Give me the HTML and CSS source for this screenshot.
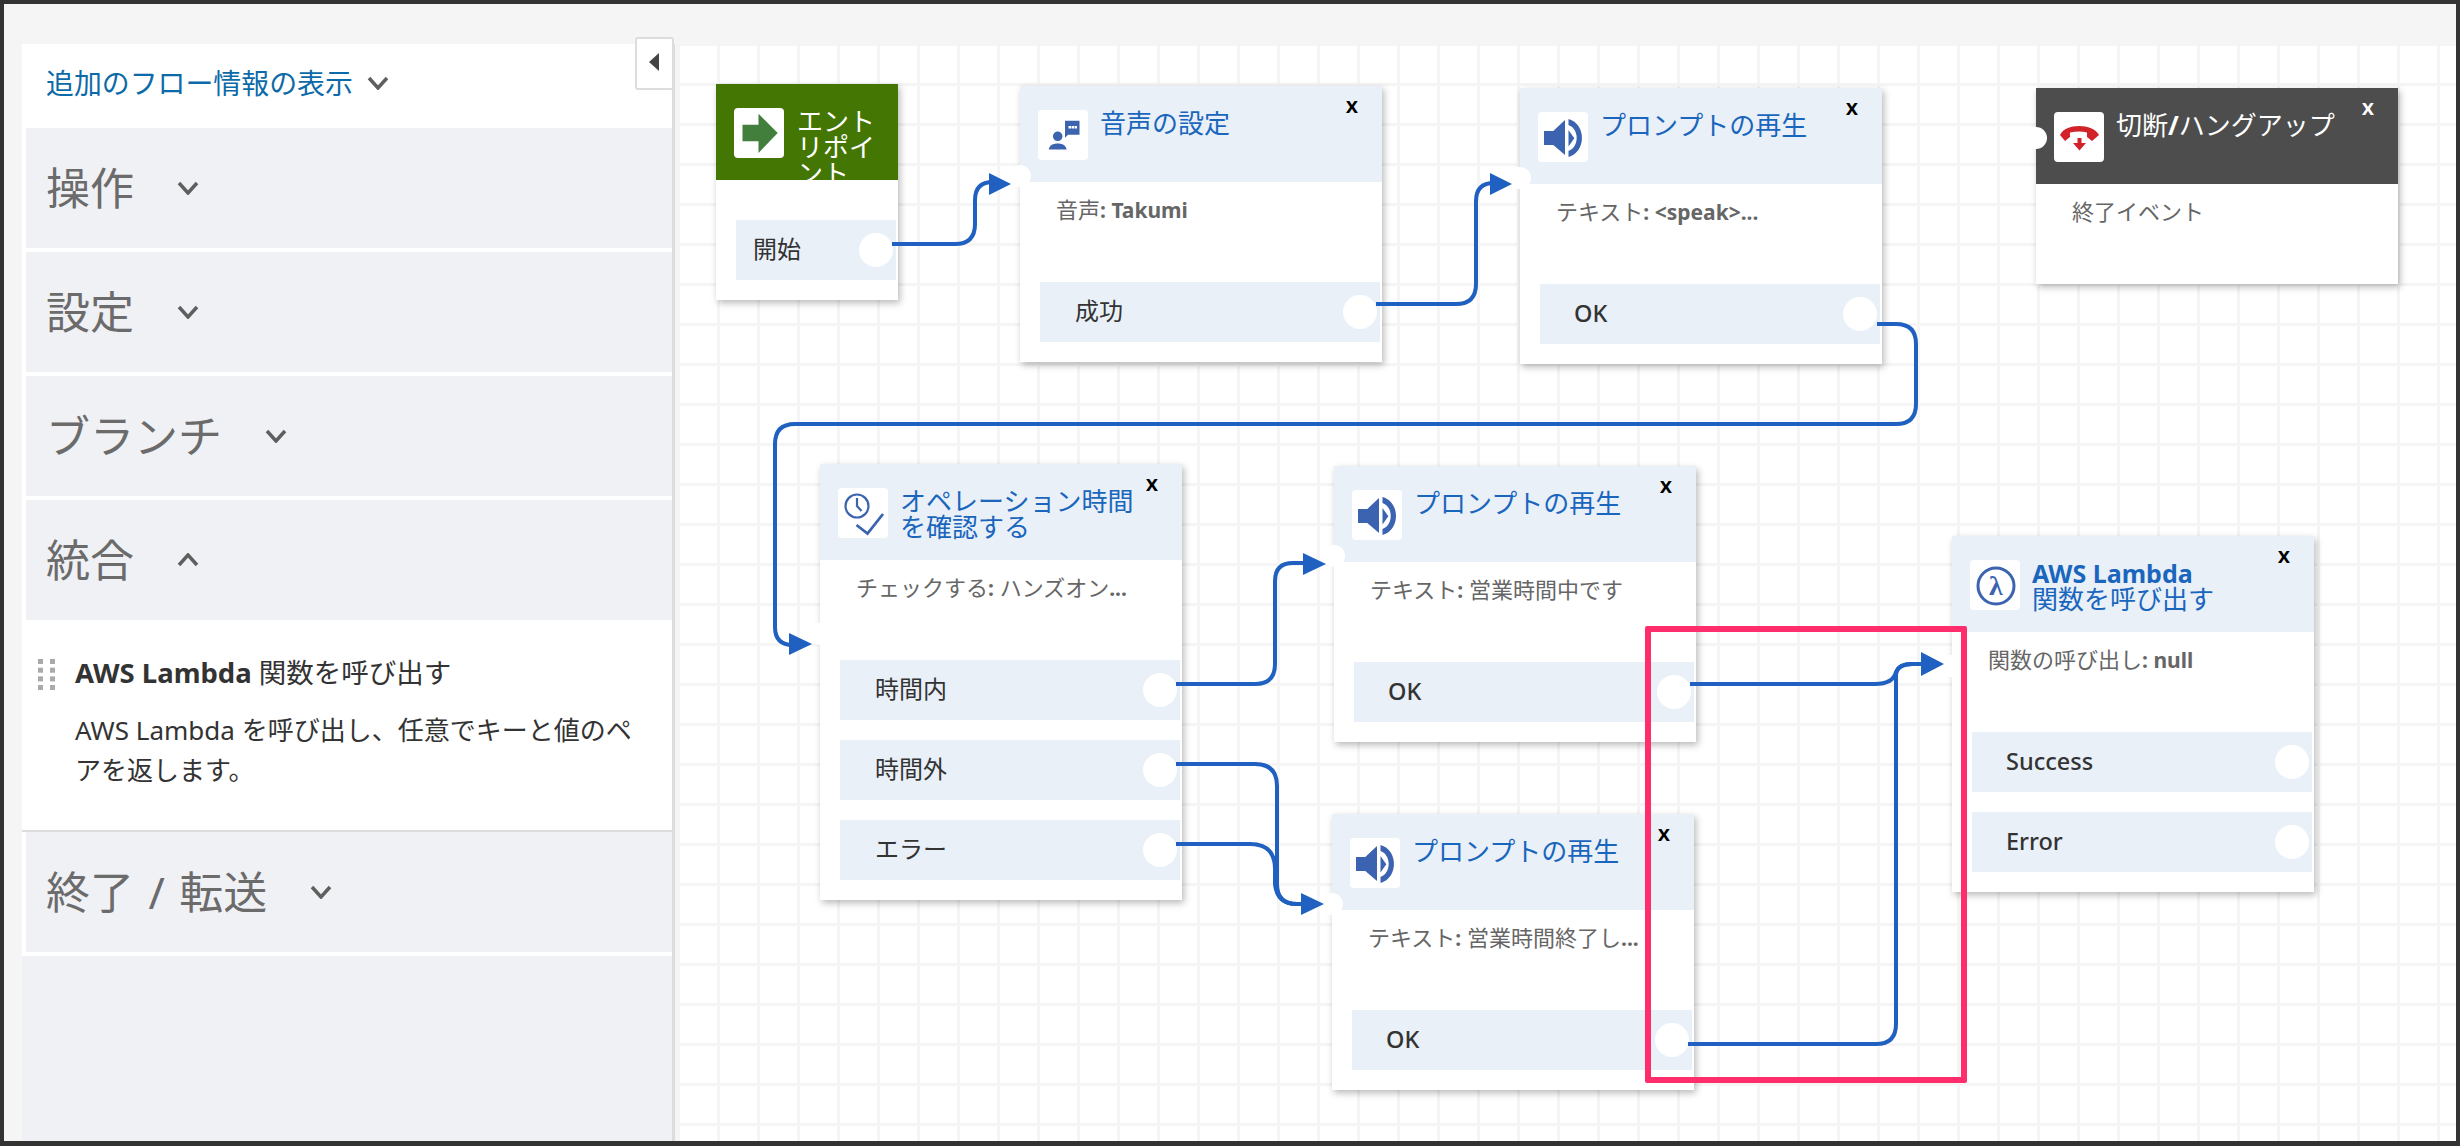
FILE: index.html
```html
<!DOCTYPE html>
<html lang="ja">
<head>
<meta charset="utf-8">
<title>コンタクトフロー</title>
<link rel="stylesheet" href="styles.css">
</head>
<body>
<div class="frame">
  <aside class="sidebar">
    <div class="sidebar-head">
      <a class="info-link">追加のフロー情報の表示</a>
      <svg class="chev chev-small" viewBox="0 0 22 14"><path d="M2 2l9 10 9-10"/></svg>
    </div>
    <button class="collapse"><svg viewBox="0 0 10 18"><path d="M10 0v18L0 9z"/></svg></button>
    <section class="group"><h2>操作</h2><svg class="chev" viewBox="0 0 22 14"><path d="M2 2l9 10 9-10"/></svg></section>
    <section class="group"><h2>設定</h2><svg class="chev" viewBox="0 0 22 14"><path d="M2 2l9 10 9-10"/></svg></section>
    <section class="group"><h2>ブランチ</h2><svg class="chev" viewBox="0 0 22 14"><path d="M2 2l9 10 9-10"/></svg></section>
    <section class="group group-open"><h2>統合</h2><svg class="chev" viewBox="0 0 22 14"><path d="M2 12l9-10 9 10"/></svg></section>
    <div class="group-body">
      <svg class="handle" viewBox="0 0 17 31"><g><rect width="5" height="5"/><rect x="12" width="5" height="5"/><rect y="8.7" width="5" height="5"/><rect x="12" y="8.7" width="5" height="5"/><rect y="17.4" width="5" height="5"/><rect x="12" y="17.4" width="5" height="5"/><rect y="26" width="5" height="5"/><rect x="12" y="26" width="5" height="5"/></g></svg>
      <h3><b>AWS Lambda</b> 関数を呼び出す</h3>
      <p>AWS Lambda を呼び出し、任意でキーと値のペアを返します。</p>
    </div>
    <section class="group group-last"><h2>終了 / 転送</h2><svg class="chev" viewBox="0 0 22 14"><path d="M2 2l9 10 9-10"/></svg></section>
  </aside>

  <main class="canvas">
    <article class="node node-entry">
      <header class="node-head head-green">
        <span class="tile"><svg viewBox="0 0 50 50"><path class="ic-green" d="M8.5 16.7h16V5.7L43.7 25 24.500 45V33.300h-16z"/></svg></span>
        <h4 class="node-title title-white title-entry">エントリポイント</h4>
      </header>
      <div class="node-gap"></div>
      <div class="row row-entry"><span>開始</span><i class="dot"></i></div>
    </article>

    <article class="node node-voice">
      <header class="node-head">
        <span class="tile"><svg viewBox="0 0 50 50"><path class="ic-blue" d="M27 10.700h14.500v14H30l-3 3zM19.700 21.500a4.800 4.800 0 1 1 0 9.600 4.800 4.800 0 0 1 0-9.600zM10.800 39.500c.5-4 4-6 8.900-6s8.400 2 8.900 6z"/><path class="ic-white" d="M30.500 16h2.500v2.500h-2.500zM33.500 16H36v2.500h-2.500zM36.500 16H39v2.500h-2.500z"/></svg></span>
        <h4 class="node-title">音声の設定</h4>
      </header>
      <span class="close">x</span>
      <i class="port port-std"></i>
      <div class="node-desc">音声<b>: Takumi</b></div>
      <div class="row"><span>成功</span><i class="dot"></i></div>
    </article>

    <article class="node node-prompt1">
      <header class="node-head">
        <span class="tile"><svg viewBox="0 0 50 50"><path class="ic-blue" d="M6 19h9.300L27 8v35L15.300 33H6zM30.500 18l5.800 8.300-5.800 8.300zM30.500 7c18 5 18 33 0 38v-6c11-4 11-22 0-26z"/></svg></span>
        <h4 class="node-title">プロンプトの再生</h4>
      </header>
      <span class="close">x</span>
      <i class="port port-std"></i>
      <div class="node-desc">テキスト<b>: &lt;speak&gt;...</b></div>
      <div class="row row-latin"><span>OK</span><i class="dot"></i></div>
    </article>

    <article class="node node-hangup">
      <header class="node-head head-dark">
        <span class="tile"><svg viewBox="0 0 50 50"><path class="ic-red" d="M6 23C11 11 39 11 45 23l-7 6-5-4v-4.500c-5-1.500-11-1.500-17 0V25l-5 4zM23.500 26h4v5H32l-6.500 7.500L19 31h4.500z"/></svg></span>
        <h4 class="node-title title-white">切断<b>/</b>ハングアップ</h4>
      </header>
      <span class="close close-white">x</span>
      <i class="port port-hangup"></i>
      <div class="node-desc">終了イベント</div>
    </article>

    <article class="node node-hours">
      <header class="node-head">
        <span class="tile"><svg viewBox="0 0 50 50"><circle class="ic-line" cx="19" cy="18" r="11.500"/><path class="ic-line" d="M19 10v8l4.500 5"/><path class="ic-check" d="M18.500 37l11 8.500L45 26"/></svg></span>
        <h4 class="node-title title-hours">オペレーション時間を確認する</h4>
      </header>
      <span class="close">x</span>
      <i class="port port-hours"></i>
      <div class="node-desc">チェックする<b>:</b> ハンズオン<b>...</b></div>
      <div class="row row-stack"><span>時間内</span><i class="dot"></i></div>
      <div class="row row-stack"><span>時間外</span><i class="dot"></i></div>
      <div class="row"><span>エラー</span><i class="dot"></i></div>
    </article>

    <article class="node node-prompt2">
      <header class="node-head">
        <span class="tile"><svg viewBox="0 0 50 50"><path class="ic-blue" d="M6 19h9.300L27 8v35L15.300 33H6zM30.500 18l5.800 8.300-5.800 8.300zM30.500 7c18 5 18 33 0 38v-6c11-4 11-22 0-26z"/></svg></span>
        <h4 class="node-title">プロンプトの再生</h4>
      </header>
      <span class="close">x</span>
      <i class="port port-std"></i>
      <div class="node-desc">テキスト<b>:</b> 営業時間中です</div>
      <div class="row row-latin"><span>OK</span><i class="dot"></i></div>
    </article>

    <article class="node node-prompt3">
      <header class="node-head">
        <span class="tile"><svg viewBox="0 0 50 50"><path class="ic-blue" d="M6 19h9.300L27 8v35L15.300 33H6zM30.500 18l5.800 8.300-5.800 8.300zM30.500 7c18 5 18 33 0 38v-6c11-4 11-22 0-26z"/></svg></span>
        <h4 class="node-title">プロンプトの再生</h4>
      </header>
      <span class="close">x</span>
      <i class="port port-std"></i>
      <div class="node-desc">テキスト<b>:</b> 営業時間終了し<b>...</b></div>
      <div class="row row-latin"><span>OK</span><i class="dot"></i></div>
    </article>

    <article class="node node-lambda">
      <header class="node-head">
        <span class="tile"><svg viewBox="0 0 50 50"><circle class="ic-ring" cx="26" cy="26" r="18"/><text class="ic-lambda" x="26" y="35" text-anchor="middle">λ</text></svg></span>
        <h4 class="node-title"><b class="title-latin">AWS Lambda</b><br>関数を呼び出す</h4>
      </header>
      <span class="close">x</span>
      <i class="port port-lambda"></i>
      <div class="node-desc">関数の呼び出し<b>: null</b></div>
      <div class="row row-stack row-latin"><span>Success</span><i class="dot"></i></div>
      <div class="row row-latin"><span>Error</span><i class="dot"></i></div>
    </article>

    <svg class="wires" viewBox="677 45 1779 1096">
      <g class="wire">
        <path d="M892 244H955Q975 244 975 224V200Q975 182 993 182"/>
        <path d="M1376 304H1456Q1476 304 1476 284V201Q1476 183 1494 183"/>
        <path d="M1877 324H1896Q1916 324 1916 344V404Q1916 424 1896 424H795Q775 424 775 444V627Q775 645 793 645"/>
        <path d="M1176 684H1255Q1275 684 1275 664V581Q1275 563 1293 563H1305"/>
        <path d="M1176 764H1255Q1277 764 1277 786V884Q1277 904 1297 904H1303"/>
        <path d="M1176 844H1250Q1275 844 1275 869V884Q1277 904 1297 904H1303"/>
        <path d="M1690 684H1875Q1893 684 1896 672Q1899 664 1912 664H1923"/>
        <path d="M1688 1044H1876Q1896 1044 1896 1024V676Q1896 664 1912 664H1923"/>
      </g>
      <g class="arrow">
        <path d="M989 173l22 11-22 11z"/>
        <path d="M1490 173l22 11-22 11z"/>
        <path d="M789 633l23 11-23 11z"/>
        <path d="M1303 553l23 11-23 11z"/>
        <path d="M1301 893l23 11-23 11z"/>
        <path d="M1921 652l23 12-23 12z"/>
      </g>
    </svg>
    <div class="highlight"></div>
  </main>
</div>
</body>
</html>
```
FILE: styles.css
```css
* { box-sizing: border-box; }
html, body { margin: 0; padding: 0; height: 100%; }
body {
  font-family: "Noto Sans", "Noto Sans CJK JP", sans-serif;
  background: #f5f5f5;
}
.frame {
  display: flex;
  height: 1146px;
  border: solid #333;
  border-width: 4px 4px 5px 4px;
  padding: 40px 0 0 18px;
  background: #f5f5f5;
  overflow: hidden;
}

/* sidebar */
.sidebar {
  position: relative;
  flex: 0 0 653px;
  margin-right: 2px;
  background: #f0f1f5;
  border-right: 3px solid #ddd;
}
.sidebar-head {
  display: flex;
  align-items: center;
  gap: 14px;
  height: 84px;
  padding: 0 0 6px 24px;
  background: #fff;
}
.info-link { color: #0d6aa8; font-size: 27.900px; line-height: 36px; }
.chev { flex: none; width: 22px; height: 14px; margin-left: 43px; }
.chev path { fill: none; stroke: #5f5f5f; stroke-width: 3.500; }
.chev-small { margin-left: 0; }
.collapse {
  position: absolute;
  left: 613px;
  top: -7px;
  width: 39px;
  height: 53px;
  padding: 0;
  display: flex;
  align-items: center;
  justify-content: center;
  background: #fff;
  border: 2px solid #ddd;
  border-radius: 3px;
}
.collapse svg { width: 10px; height: 18px; margin: 0 2px 4px 0; fill: #444; }
.group {
  display: flex;
  align-items: center;
  height: 124px;
  padding: 0 0 0 20px;
  border: solid #fff;
  border-width: 0 0 4px 4px;
  background: #f0f1f5;
}
.group h2 { margin: 0; font-size: 44px; font-weight: 400; color: #6b6b6b; line-height: 60px; }
.group-last h2 { word-spacing: 3px; }
.group-open { height: 120px; border-bottom: 0; }
.group-body {
  position: relative;
  height: 212px;
  padding: 33px 40px 0 53px;
  background: #fff;
  border-bottom: 2px solid #ddd;
}
.group-body h3 { margin: 0 0 17px; font-size: 27.500px; font-weight: 400; line-height: 40px; color: #333; }
.group-body p { margin: 0; font-size: 26px; line-height: 40px; color: #333; }
.handle { position: absolute; left: 16px; top: 39px; width: 17px; height: 31px; fill: #aaa; }

/* canvas */
.canvas {
  position: relative;
  flex: 1;
  margin-top: 1px;
  background-color: #fff;
  background-image:
    linear-gradient(to right, #f5f5f5 3px, transparent 3px),
    linear-gradient(to bottom, #f5f5f5 3px, transparent 3px);
  background-size: 40px 40px;
  background-position: 0 38px;
}

.node {
  position: absolute;
  width: 362px;
  background: #fff;
  box-shadow: 2px 3px 7px rgba(0, 0, 0, .28);
  display: flex;
  flex-direction: column;
}
.node-entry { left: 39px; top: 39px; width: 182px; }
.node-voice { left: 343px; top: 41px; }
.node-prompt1 { left: 843px; top: 43px; }
.node-hangup { left: 1359px; top: 43px; }
.node-hours { left: 143px; top: 419px; }
.node-prompt2 { left: 657px; top: 421px; }
.node-prompt3 { left: 655px; top: 769px; }
.node-lambda { left: 1275px; top: 491px; }

.node-head {
  display: flex;
  align-items: flex-start;
  flex: none;
  height: 96px;
  padding: 24px 0 0 18px;
  background: #e9f0f8;
  overflow: hidden;
}
.head-green { background: #447604; }
.head-dark { background: #4d4d4d; }
.tile {
  flex: none;
  width: 50px;
  height: 50px;
  margin-right: 12px;
  background: #fff;
  border-radius: 4px;
}
.tile svg { display: block; width: 50px; height: 50px; }
.node-title {
  margin: 0;
  font-size: 26px;
  font-weight: 400;
  line-height: 26px;
  color: #1a66bd;
}
.title-latin { font-size: 25px; }
.title-white { color: #fff; }
.title-entry { width: 84px; margin-left: 1px; }
.title-hours { width: 240px; }
.close {
  position: absolute;
  right: 24px;
  top: 3px;
  font-size: 22px;
  font-weight: 600;
  line-height: 30px;
  color: #000;
}
.close-white { color: #fff; }
.node-desc {
  flex: none;
  height: 100px;
  padding: 9px 0 0 36px;
  font-size: 22px;
  line-height: 36px;
  color: #666;
  white-space: nowrap;
}
.node-desc b { font-size: 21px; }
.node-gap { flex: none; height: 40px; }
.row {
  display: flex;
  flex: none;
  align-items: center;
  justify-content: space-between;
  height: 60px;
  margin: 0 2px 20px 20px;
  padding: 0 3px 6px 35px;
  background: #e9f0f8;
  font-size: 24px;
  color: #333;
}
.row-latin { font-weight: 500; font-size: 23.500px; padding: 0 3px 3px 34px; }
.row-latin .dot { margin-top: 3px; }
.row-entry { margin-right: 2px; padding-left: 17px; }
.dot {
  flex: none;
  width: 34px;
  height: 34px;
  margin-top: 6px;
  border-radius: 50%;
  background: #fff;
}
.port {
  position: absolute;
  left: -11px;
  width: 22px;
  height: 22px;
  border-radius: 50%;
  background: #fff;
}
.port-std { top: 79px; }
.port-hangup { top: 39px; }
.port-hours { top: 159px; }
.port-lambda { top: 119px; }

/* icons */
.ic-green { fill: #427f3c; }
.ic-blue { fill: #3b63b0; }
.ic-white { fill: #fff; }
.ic-red { fill: #d2232a; }
.ic-line { fill: none; stroke: #3b63b0; stroke-width: 2.200; }
.ic-check { fill: none; stroke: #3b63b0; stroke-width: 2.800; }
.ic-ring { fill: none; stroke: #3b63b0; stroke-width: 3; }
.ic-lambda { font-family: "Liberation Serif", serif; font-size: 28px; font-weight: 700; fill: #3b63b0; }

/* connections */
.wires { position: absolute; left: 0; top: 0; width: 1779px; height: 1096px; pointer-events: none; }
.wire path { fill: none; stroke: #1f60c0; stroke-width: 4; }
.arrow path { fill: #1f60c0; }
.highlight {
  position: absolute;
  left: 968px;
  top: 581px;
  width: 322px;
  height: 457px;
  border: 6px solid #ff2d6b;
  border-radius: 2px;
  pointer-events: none;
}
```
